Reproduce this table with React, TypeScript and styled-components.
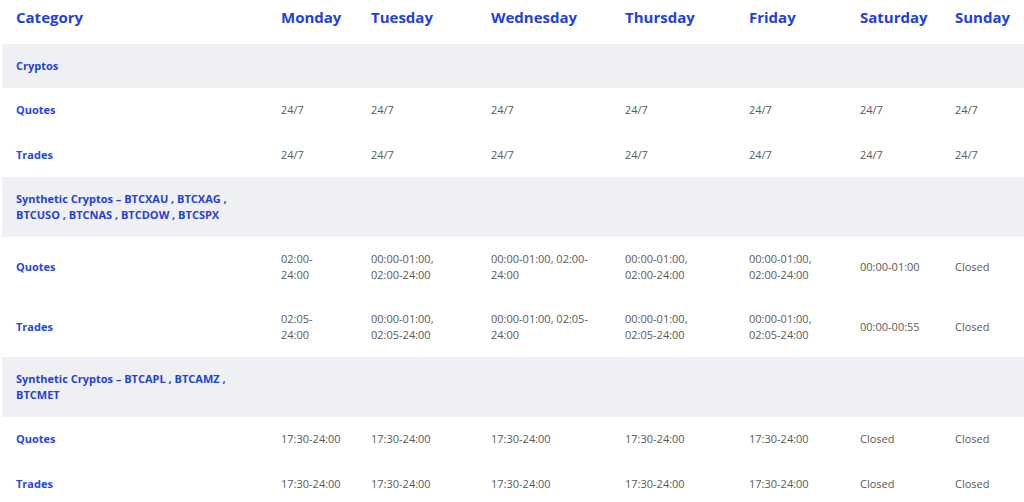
import styled, { createGlobalStyle } from 'styled-components';

const GlobalStyle = createGlobalStyle`
  body {
    margin: 0;
    background: #fff;
    font-family: 'Open Sans', 'Liberation Sans', sans-serif;
  }
`;

const days = ['Monday', 'Tuesday', 'Wednesday', 'Thursday', 'Friday', 'Saturday', 'Sunday'];
const widths = [263, 90, 120, 134, 124, 111, 95, 85];

interface Group {
  title: string,
  nowrap?: boolean,
  rows: { label: string, values: string[] }[],
}

const groups: Group[] = [
  {
    title: 'Cryptos',
    rows: [
      { label: 'Quotes', values: ['24/7', '24/7', '24/7', '24/7', '24/7', '24/7', '24/7'] },
      { label: 'Trades', values: ['24/7', '24/7', '24/7', '24/7', '24/7', '24/7', '24/7'] },
    ],
  },
  {
    title: 'Synthetic Cryptos – BTCXAU , BTCXAG , BTCUSO , BTCNAS , BTCDOW , BTCSPX',
    rows: [
      {
        label: 'Quotes',
        values: ['02:00-24:00', '00:00-01:00, 02:00-24:00', '00:00-01:00, 02:00-24:00',
          '00:00-01:00, 02:00-24:00', '00:00-01:00, 02:00-24:00', '00:00-01:00', 'Closed'],
      },
      {
        label: 'Trades',
        values: ['02:05-24:00', '00:00-01:00, 02:05-24:00', '00:00-01:00, 02:05-24:00',
          '00:00-01:00, 02:05-24:00', '00:00-01:00, 02:05-24:00', '00:00-00:55', 'Closed'],
      },
    ],
  },
  {
    title: 'Synthetic Cryptos – BTCAPL , BTCAMZ , BTCMET',
    nowrap: true,
    rows: [
      { label: 'Quotes', values: ['17:30-24:00', '17:30-24:00', '17:30-24:00', '17:30-24:00', '17:30-24:00', 'Closed', 'Closed'] },
      { label: 'Trades', values: ['17:30-24:00', '17:30-24:00', '17:30-24:00', '17:30-24:00', '17:30-24:00', 'Closed', 'Closed'] },
    ],
  },
];

const Wrapper = styled.div`
  padding-left: 2px;
  width: 1022px;
`;

const Table = styled.table`
  width: 1022px;
  table-layout: fixed;
  border-collapse: collapse;
`;

const HeadCell = styled.th`
  padding: 0 0 10px 16px;
  height: 34px;
  text-align: left;
  vertical-align: middle;
  font-size: 15px;
  font-weight: 700;
  color: #1e3fe3;
  white-space: nowrap;
  &:first-child {
    padding-left: 14px;
  }
`;

const GroupRow = styled.tr`
  background: #eff0f4;
`;

const DataRow = styled.tr`
  height: 44.5px;
`;

const GroupCell = styled.td`
  padding: 14px 0 14px 14px;
  line-height: 16px;
  font-size: 11px;
  font-weight: 700;
  color: #1e3fe3;
  & span {
    display: block;
    width: 240px;
  }
`;

const LabelCell = styled.td`
  padding: 14px 0 14px 14px;
  line-height: 16px;
  font-size: 11px;
  font-weight: 700;
  color: #2446e6;
`;

const Cell = styled.td<{ $nowrap?: boolean }>`
  padding: 14px 18px 14px 16px;
  line-height: 16px;
  font-size: 11px;
  color: #5a5a5a;
  vertical-align: middle;
  white-space: ${({ $nowrap }) => ($nowrap ? 'nowrap' : 'normal')};
`;

function App() {
  return (
    <Wrapper>
      <GlobalStyle />
      <Table>
        <colgroup>
          {widths.map((w, i) => <col key={ i } style={ { width: w } } />)}
        </colgroup>
        <thead>
          <tr>
            <HeadCell>Category</HeadCell>
            {days.map((d) => <HeadCell key={ d }>{ d }</HeadCell>)}
          </tr>
        </thead>
        <tbody>
          {groups.map((g) => [
            <GroupRow key={ g.title }>
              <GroupCell colSpan={ 8 }><span>{ g.title }</span></GroupCell>
            </GroupRow>,
            ...g.rows.map((r) => (
              <DataRow key={ g.title + r.label }>
                <LabelCell>{ r.label }</LabelCell>
                {r.values.map((v, i) => <Cell key={ i } $nowrap={ g.nowrap }>{ v }</Cell>)}
              </DataRow>
            )),
          ])}
        </tbody>
      </Table>
    </Wrapper>
  );
}

export default App;
